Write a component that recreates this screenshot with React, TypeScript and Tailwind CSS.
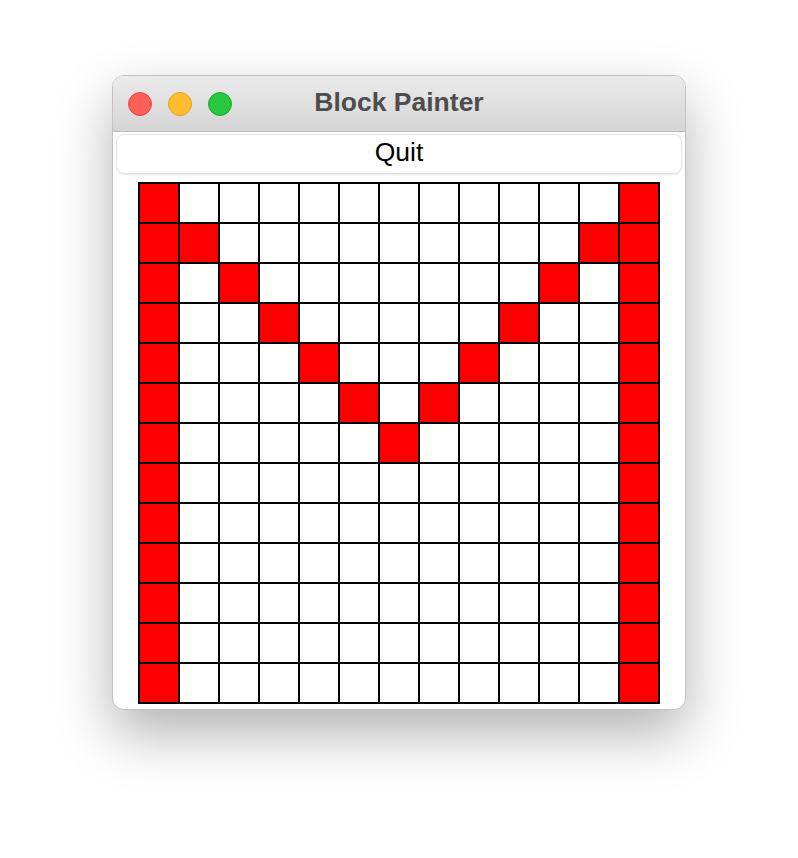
const SIZE = 13;

// red cells: both side columns plus a V shape in the top rows
const isRed = (r: number, c: number) => {
  if (c === 0 || c === SIZE - 1) return true;
  if (r >= 1 && r <= 6 && (c === r || c === SIZE - 1 - r)) return true;
  return false;
};

function TrafficLights() {
  return (
    <div className="flex items-center gap-[16px]">
      <span className="h-[24px] w-[24px] rounded-full border border-[#e0443e] bg-[#ff5f57]" />
      <span className="h-[24px] w-[24px] rounded-full border border-[#dea123] bg-[#febc2e]" />
      <span className="h-[24px] w-[24px] rounded-full border border-[#1aab29] bg-[#28c840]" />
    </div>
  );
}

export default function App() {
  const rows = Array.from({ length: SIZE }, (_, r) => r);
  const cols = Array.from({ length: SIZE }, (_, c) => c);

  return (
    <div
      className="flex h-[858px] w-full justify-center bg-white pt-[75px]"
      style={{ fontFamily: '"Liberation Sans", Arial, sans-serif' }}
    >
      <div className="flex h-[635px] w-[574px] flex-col overflow-hidden rounded-[12px] border border-[#c2c2c2] bg-white shadow-[0_24px_55px_rgba(0,0,0,0.3)]">
        {/* title bar */}
        <div className="relative flex h-[56px] shrink-0 items-center border-b border-[#bcbcbc] bg-gradient-to-b from-[#ebebeb] to-[#d5d5d5] px-[15px]">
          <TrafficLights />
          <div className="absolute inset-0 flex items-center justify-center pb-[1px] text-[26.5px] font-bold text-[#4d4d4d]">
            Block Painter
          </div>
        </div>

        {/* body */}
        <div className="flex flex-col px-[3px] pt-[2px]">
          <button className="flex h-[40px] w-full items-center justify-center rounded-[8px] border border-[#e3e3e3] bg-white pb-[2px] text-[26.5px] text-black shadow-[0_1px_1px_rgba(0,0,0,0.08)]">
            Quit
          </button>

          <div className="mt-[8px] flex justify-center">
            <div className="grid grid-cols-[repeat(13,38px)] gap-[2px] bg-black p-[2px]">
              {rows.map((r) =>
                cols.map((c) => (
                  <div
                    key={`${r}-${c}`}
                    className={isRed(r, c) ? "h-[38px] w-[38px] bg-[#ff0000]" : "h-[38px] w-[38px] bg-white"}
                  />
                ))
              )}
            </div>
          </div>
        </div>
      </div>
    </div>
  );
}
